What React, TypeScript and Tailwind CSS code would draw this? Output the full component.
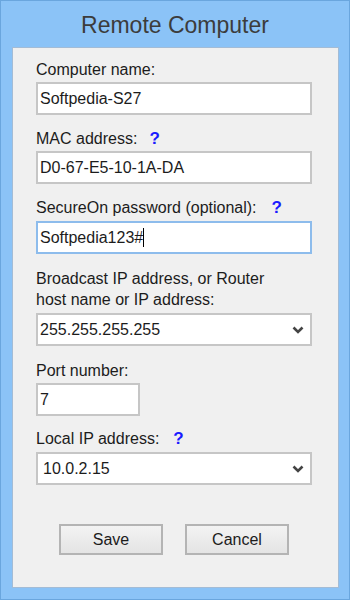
const Help = () => (
  <span className="ml-[12px] font-bold text-[#1a1aff] text-[17px]">?</span>
);

const Chevron = () => (
  <svg width="12" height="8" viewBox="0 0 12 8" className="text-[#444]">
    <path d="M1.5 1.5 L6 6 L10.5 1.5" fill="none" stroke="currentColor" strokeWidth="2.6" />
  </svg>
);

const Field = ({ children, focused, className = '' }: { children: React.ReactNode; focused?: boolean; className?: string }) => (
  <div
    className={`h-[33px] flex items-center bg-white border-2 ${focused ? 'border-[#8dbcec]' : 'border-[#c6c6c6]'} ${className}`}
  >
    {children}
  </div>
);

export default function App() {
  return (
    <div
      className="w-[350px] h-[600px] bg-[#8bc3f7] border border-[#6aa6de] flex flex-col text-[#1c1c1c]"
      style={{ fontFamily: '"Liberation Sans", Arial, sans-serif' }}
    >
      <div className="h-[46px] flex items-center justify-center">
        <h1 className="text-[23px] text-[#3c3c3c] leading-none mt-[2px]">Remote Computer</h1>
      </div>
      <div className="ml-[11px] w-[327px] h-[541px] bg-[#f0f0f0] border border-[#a3bcd6] pl-[23px] pt-[13px] text-[16px]">
        <div className="leading-[18px] mb-[3px]">Computer name:</div>
        <Field className="w-[276px] pl-[2px] mb-[15px]">Softpedia-S27</Field>

        <div className="leading-[18px] mb-[3px] flex items-center">
          MAC address:<Help />
        </div>
        <Field className="w-[276px] pl-[2px] mb-[15px]">D0-67-E5-10-1A-DA</Field>

        <div className="leading-[18px] mb-[4px] flex items-center">
          SecureOn password (optional):<span className="ml-[15px] font-bold text-[#1a1aff] text-[17px]">?</span>
        </div>
        <Field focused className="w-[276px] pl-[2px] mb-[14px]">
          Softpedia123#<span className="inline-block w-px h-[19px] bg-black" />
        </Field>

        <div className="leading-[21px] mb-[3px]">
          Broadcast IP address, or Router
          <br />
          host name or IP address:
        </div>
        <Field className="w-[276px] pl-[2px] pr-[6px] justify-between mb-[16px]">
          <span>255.255.255.255</span>
          <Chevron />
        </Field>

        <div className="leading-[18px] mb-[3px]">Port number:</div>
        <Field className="w-[104px] pl-[2px] mb-[14px]">7</Field>

        <div className="leading-[18px] mb-[4px] flex items-center">
          Local IP address:<span className="ml-[14px] font-bold text-[#1a1aff] text-[17px]">?</span>
        </div>
        <Field className="w-[276px] pl-[5px] pr-[6px] justify-between">
          <span>10.0.2.15</span>
          <Chevron />
        </Field>

        <div className="flex gap-[22px] ml-[23px] mt-[39px]">
          <button className="w-[104px] h-[31px] border-2 border-[#b4b4b4] bg-gradient-to-b from-[#f3f3f3] to-[#e4e4e4] text-[16px] text-[#1c1c1c]">
            Save
          </button>
          <button className="w-[104px] h-[31px] border-2 border-[#b4b4b4] bg-gradient-to-b from-[#f3f3f3] to-[#e4e4e4] text-[16px] text-[#1c1c1c]">
            Cancel
          </button>
        </div>
      </div>
    </div>
  );
}
